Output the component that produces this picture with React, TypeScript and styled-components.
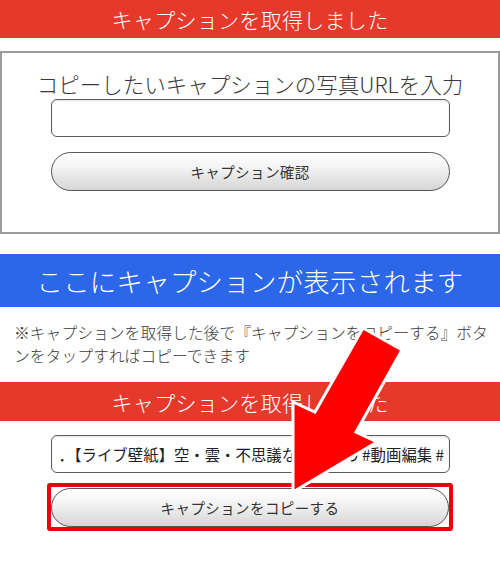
import React from "react";
import styled, { createGlobalStyle } from "styled-components";

const Global = createGlobalStyle`
  html, body { margin: 0; padding: 0; background: #fff; }
  body { font-family: "Noto Sans CJK JP", "Noto Sans", sans-serif; color: #333; }
`;

const Page = styled.div`
  position: relative;
  width: 500px;
  height: 577px;
  overflow: hidden;
  background: #fff;
`;

const Bar = styled.div<{ $tone: "red" | "blue"; $h: number; $fs: number }>`
  height: ${(p) => p.$h}px;
  background: ${(p) => (p.$tone === "red" ? "#e5392b" : "#2c66e9")};
  color: #fff;
  font-size: ${(p) => p.$fs}px;
  font-weight: 300;
  display: flex;
  align-items: center;
  justify-content: center;
  letter-spacing: 0.3px;
  white-space: nowrap;
`;

const Spacer = styled.div<{ $h: number }>`
  height: ${(p) => p.$h}px;
`;

const FormBox = styled.div`
  margin-top: 13px;
  height: 179px;
  border: 2px solid #9c9c9c;
  display: flex;
  flex-direction: column;
  align-items: center;
`;

const Prompt = styled.div`
  margin-top: 16px;
  height: 30px;
  line-height: 30px;
  font-size: 21.5px;
  font-weight: 300;
  color: #3a3a3a;
  white-space: nowrap;
`;

const Field = styled.div`
  box-sizing: border-box;
  width: 399px;
  height: 38px;
  border: 1.5px solid #5c5c5c;
  border-radius: 6px;
  background: #fff;
  box-shadow: inset 0 1px 2px rgba(0, 0, 0, 0.12);
  padding: 0 5px 0 7px;
  display: flex;
  align-items: center;
  overflow: hidden;
  white-space: nowrap;
  font-size: 15.4px;
  color: #222;
`;

const FieldText = styled.span`
  overflow: hidden;
  display: block;
  width: 100%;
`;

const PillButton = styled.div<{ $mt?: number }>`
  box-sizing: border-box;
  margin-top: ${(p) => p.$mt ?? 0}px;
  width: 399px;
  height: 39px;
  border: 1.5px solid #555;
  border-radius: 20px;
  background: linear-gradient(#ffffff 0%, #f3f3f3 40%, #d6d6d6 100%);
  display: flex;
  align-items: center;
  justify-content: center;
  font-size: 14.5px;
  color: #333;
  letter-spacing: 0.4px;
`;

const Note = styled.p`
  margin: 14px 0 15px;
  padding: 0 10px 0 14px;
  font-size: 15.8px;
  font-weight: 300;
  line-height: 23px;
  color: #3a3a3a;
`;

const ResultArea = styled.div`
  display: flex;
  flex-direction: column;
  align-items: center;
  padding-top: 14px;
`;

const Highlight = styled.div`
  margin-top: 10px;
  width: 406px;
  height: 48px;
  box-sizing: border-box;
  border: 4px solid #e8000d;
  border-radius: 3px;
  display: flex;
  align-items: center;
  justify-content: center;
`;

const ArrowLayer = styled.svg`
  position: absolute;
  left: 0;
  top: 0;
  pointer-events: none;
`;

export default function App() {
  return (
    <>
      <Global />
      <Page>
        <Bar $tone="red" $h={38} $fs={21}>
          キャプションを取得しました
        </Bar>
        <FormBox>
          <Prompt>コピーしたいキャプションの写真URLを入力</Prompt>
          <Field />
          <PillButton $mt={15}>キャプション確認</PillButton>
        </FormBox>
        <Spacer $h={20} />
        <Bar $tone="blue" $h={53} $fs={26.4}>
          ここにキャプションが表示されます
        </Bar>
        <Note>
          ※キャプションを取得した後で『キャプションをコピーする』ボタンをタップすればコピーできます
        </Note>
        <Bar $tone="red" $h={39} $fs={21}>
          キャプションを取得しました
        </Bar>
        <ResultArea>
          <Field>
            <FieldText>．【ライブ壁紙】空・雲・不思議な空模様の #動画編集 #iPhone壁紙</FieldText>
          </Field>
          <Highlight>
            <PillButton>キャプションをコピーする</PillButton>
          </Highlight>
        </ResultArea>
        <ArrowLayer width="500" height="577" viewBox="0 0 500 577">
          <polygon
            points="363,328 402,350 356,432 377,442 293,492 293,402 315,412"
            fill="#ff0000"
            stroke="#ffffff"
            strokeWidth="3"
            strokeLinejoin="miter"
          />
        </ArrowLayer>
      </Page>
    </>
  );
}
